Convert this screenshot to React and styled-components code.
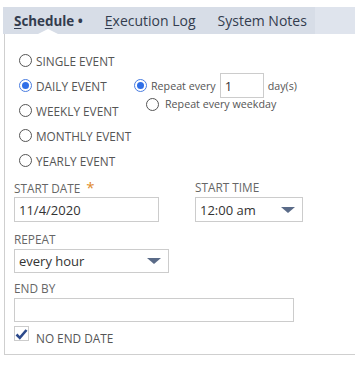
import React from "react";
import styled, { createGlobalStyle } from "styled-components";

const GlobalStyle = createGlobalStyle`
  body {
    margin: 0;
    background: #fff;
    font-family: "Open Sans", "DejaVu Sans", sans-serif;
  }
`;

const Page = styled.div`
  padding: 7px 0 0 3px;
  width: 352px;
`;

const TabBar = styled.div`
  display: flex;
  height: 27px;
  background: #dfe4ed;
`;

const TabList = styled.div`
  display: flex;
  align-items: center;
  gap: 22px;
  padding: 0 10px 0 11px;
  background: #d7dde7;
  width: 291px;
`;

const Tab = styled.div`
  position: relative;
  height: 100%;
  display: flex;
  align-items: center;
  font-size: ${(p) => (p.$active ? 13.4 : 14)}px;
  color: #333c4e;
  font-weight: ${(p) => (p.$active ? 700 : 400)};
  white-space: nowrap;
  u {
    text-decoration-thickness: 1px;
    text-underline-offset: 2px;
  }
  ${(p) =>
    p.$active &&
    `
    &::after {
      content: "";
      position: absolute;
      bottom: 0;
      left: 24px;
      border-left: 10px solid transparent;
      border-right: 10px solid transparent;
      border-bottom: 5px solid #fff;
    }
  `}
`;

const Panel = styled.div`
  border-left: 1px solid #cfcfcf;
  border-bottom: 1px solid #cfcfcf;
  padding: 14px 0 8px 9px;
  margin-left: 1px;
`;

const EventRow = styled.div`
  display: flex;
  align-items: center;
  height: 25px;
`;

const EventRadios = styled.div`
  display: flex;
  flex-direction: column;
  width: 122px;
  flex-shrink: 0;
`;

const EventTop = styled.div`
  display: flex;
  flex-direction: column;
`;

const Radio = styled.span`
  width: 11px;
  height: 11px;
  border-radius: 50%;
  border: 1px solid ${(p) => (p.$on ? "#4a7de0" : "#555")};
  background: #fff;
  display: inline-flex;
  align-items: center;
  justify-content: center;
  flex-shrink: 0;
  margin: 0 ${(p) => p.$after || 4}px 0 ${(p) => p.$offset || 0}px;
  &::after {
    content: "";
    width: 7px;
    height: 7px;
    border-radius: 50%;
    background: ${(p) => (p.$on ? "#2f6fe8" : "transparent")};
  }
`;

const EventLabel = styled.span`
  font-size: 11.8px;
  color: #555;
  text-transform: uppercase;
  white-space: nowrap;
`;

const SmallLabel = styled.span`
  font-size: 10.7px;
  color: #555;
  white-space: nowrap;
`;

const DailyRow = styled.div`
  display: flex;
`;

const DailyOptions = styled.div`
  display: flex;
  flex-direction: column;
  margin-left: -2px;
`;

const EveryRow = styled.div`
  display: flex;
  align-items: center;
  height: 25px;
`;

const WeekdayRow = styled.div`
  display: flex;
  align-items: center;
  height: 14px;
  margin-top: -1px;
`;

const SmallInput = styled.div`
  width: 44px;
  height: 25px;
  box-sizing: border-box;
  border: 1px solid #ccc;
  margin: 0 4px 0 4px;
  padding: 0 0 0 4px;
  display: flex;
  align-items: center;
  font-size: 13px;
  color: #333;
`;

const FieldGrid = styled.div`
  display: grid;
  grid-template-columns: 181px 1fr;
  margin-top: 7px;
`;

const Field = styled.div`
  display: flex;
  flex-direction: column;
  margin-bottom: ${(p) => p.$gap || 0}px;
`;

const FieldLabel = styled.div`
  font-size: 11.8px;
  color: #666;
  text-transform: uppercase;
  height: 15px;
  line-height: 15px;
  margin-bottom: 2px;
  white-space: nowrap;
`;

const Required = styled.span`
  color: #e08a2a;
  font-size: 15px;
  margin-left: 6px;
`;

const Box = styled.div`
  width: ${(p) => p.$w}px;
  height: ${(p) => p.$h || 25}px;
  box-sizing: border-box;
  border: 1px solid #ccc;
  display: flex;
  align-items: center;
  justify-content: space-between;
  padding: 0 7px 0 4px;
  font-size: 13px;
  color: #333;
`;

const Arrow = styled.span`
  width: 0;
  height: 0;
  border-left: 7px solid transparent;
  border-right: 7px solid transparent;
  border-top: 6px solid #5a6b88;
`;

const CheckRow = styled.div`
  display: flex;
  align-items: flex-start;
  margin-top: 4px;
`;

const CheckBox = styled.span`
  width: 15px;
  height: 15px;
  box-sizing: border-box;
  border: 1px solid #ccc;
  display: inline-flex;
  align-items: center;
  justify-content: center;
  margin-right: 7px;
`;

const CheckText = styled.span`
  font-size: 11.8px;
  line-height: 15px;
  color: #555;
  margin-top: 5px;
`;

export default function App() {
  return (
    <Page>
      <GlobalStyle />
      <TabBar>
        <TabList>
          <Tab $active>
            <span>
              <u>S</u>chedule •
            </span>
          </Tab>
          <Tab>
            <span>
              <u>E</u>xecution Log
            </span>
          </Tab>
          <Tab>System Notes</Tab>
        </TabList>
      </TabBar>
      <Panel>
        <EventTop>
          <EventRow>
            <Radio $offset={5} />
            <EventLabel>Single Event</EventLabel>
          </EventRow>
          <DailyRow>
            <EventRadios>
              <EventRow>
                <Radio $on $offset={5} />
                <EventLabel>Daily Event</EventLabel>
              </EventRow>
              <EventRow>
                <Radio $offset={5} />
                <EventLabel>Weekly Event</EventLabel>
              </EventRow>
            </EventRadios>
            <DailyOptions>
              <EveryRow>
                <Radio $on />
                <SmallLabel>Repeat every</SmallLabel>
                <SmallInput>1</SmallInput>
                <SmallLabel>day(s)</SmallLabel>
              </EveryRow>
              <WeekdayRow>
                <Radio $offset={12} $after={6} />
                <SmallLabel>Repeat every weekday</SmallLabel>
              </WeekdayRow>
            </DailyOptions>
          </DailyRow>
          <EventRow>
            <Radio $offset={5} />
            <EventLabel>Monthly Event</EventLabel>
          </EventRow>
          <EventRow>
            <Radio $offset={5} />
            <EventLabel>Yearly Event</EventLabel>
          </EventRow>
        </EventTop>
        <FieldGrid>
          <Field $gap={10}>
            <FieldLabel>
              Start Date<Required>*</Required>
            </FieldLabel>
            <Box $w={145}>11/4/2020</Box>
          </Field>
          <Field $gap={10}>
            <FieldLabel>Start Time</FieldLabel>
            <Box $w={108}>
              12:00 am
              <Arrow />
            </Box>
          </Field>
          <Field $gap={8}>
            <FieldLabel>Repeat</FieldLabel>
            <Box $w={155} $h={24}>
              every hour
              <Arrow />
            </Box>
          </Field>
        </FieldGrid>
        <Field>
          <FieldLabel>End By</FieldLabel>
          <Box $w={280} $h={24} />
        </Field>
        <CheckRow>
          <CheckBox>
            <svg width="13" height="12" viewBox="0 0 13 12">
              <path d="M1.5 6.5 L4.8 9.8 L11.5 2" fill="none" stroke="#2c4a8c" strokeWidth="2.6" />
            </svg>
          </CheckBox>
          <CheckText>NO END DATE</CheckText>
        </CheckRow>
      </Panel>
    </Page>
  );
}
